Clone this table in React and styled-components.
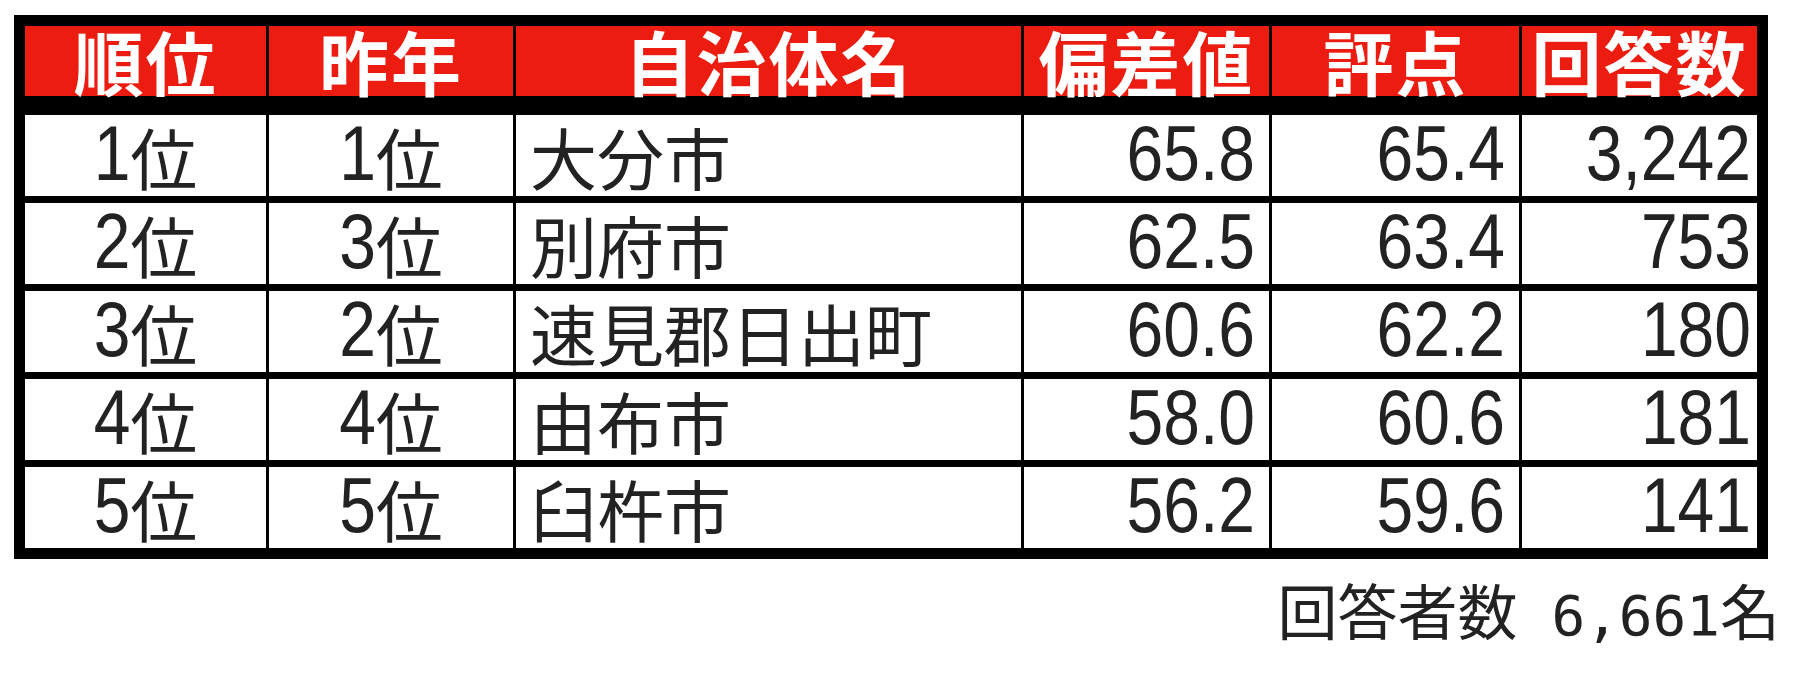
import React from "react";
import styled, { createGlobalStyle } from "styled-components";

const GlobalStyle = createGlobalStyle`
  html, body {
    margin: 0;
    padding: 0;
    background: #ffffff;
  }
  body {
    font-family: "Liberation Sans", "Noto Sans CJK JP", sans-serif;
    color: #222222;
  }
`;

const Page = styled.div`
  width: 1800px;
  height: 677px;
  padding: 15px 0 0 14px;
  box-sizing: border-box;
  background: #ffffff;
`;

const Table = styled.div`
  display: grid;
  grid-template-columns: 241px 244px 505px 245px 247px 235px;
  grid-template-rows: 82px repeat(5, 81px);
  column-gap: 3px;
  row-gap: 7px;
  width: max-content;
  padding: 11px;
  background: #000000;
`;

const HeadCell = styled.div`
  height: 70px;
  background: #ec1d10;
  color: #ffffff;
  display: flex;
  align-items: center;
  justify-content: center;
  font-family: "Noto Sans CJK JP", sans-serif;
  font-weight: 700;
  font-size: 70px;
  line-height: 70px;
  letter-spacing: 2px;
  white-space: nowrap;
`;

const Cell = styled.div`
  background: #ffffff;
  display: flex;
  align-items: center;
  justify-content: ${(p) =>
    p.$align === "left" ? "flex-start" : p.$align === "right" ? "flex-end" : "center"};
  padding: ${(p) =>
    p.$align === "left" ? "0 0 0 14px" : p.$align === "right" ? `0 ${p.$pad || 14}px 0 0` : "0"};
  font-size: 66px;
  line-height: 1;
  white-space: nowrap;
`;

const Num = styled.span`
  display: inline-block;
  font-family: "Liberation Sans", sans-serif;
  font-size: 66px;
  transform: scaleY(1.17);
  transform-origin: 50% 80%;
`;

const Kanji = styled.span`
  font-family: "Noto Sans CJK JP", sans-serif;
  font-size: 67px;
  font-weight: 400;
`;

const Footer = styled.div`
  display: flex;
  justify-content: flex-end;
  align-items: baseline;
  width: 1766px;
  margin-top: 20px;
  font-family: "Noto Sans CJK JP", sans-serif;
  font-size: 60px;
  line-height: 1;
  color: #222222;
`;

const FooterNum = styled.span`
  font-family: "DejaVu Sans Mono", monospace;
  font-size: 56px;
  margin-left: 34px;
`;

const headers = ["順位", "昨年", "自治体名", "偏差値", "評点", "回答数"];

const rows = [
  { rank: "1", prev: "1", name: "大分市", dev: "65.8", score: "65.4", count: "3,242" },
  { rank: "2", prev: "3", name: "別府市", dev: "62.5", score: "63.4", count: "753" },
  { rank: "3", prev: "2", name: "速見郡日出町", dev: "60.6", score: "62.2", count: "180" },
  { rank: "4", prev: "4", name: "由布市", dev: "58.0", score: "60.6", count: "181" },
  { rank: "5", prev: "5", name: "臼杵市", dev: "56.2", score: "59.6", count: "141" },
];

function Rank({ n }) {
  return (
    <>
      <Num>{n}</Num>
      <Kanji>位</Kanji>
    </>
  );
}

export default function App() {
  return (
    <>
      <GlobalStyle />
      <Page>
        <Table>
          {headers.map((h) => (
            <HeadCell key={h}>{h}</HeadCell>
          ))}
          {rows.map((r) => (
            <React.Fragment key={r.rank}>
              <Cell>
                <Rank n={r.rank} />
              </Cell>
              <Cell>
                <Rank n={r.prev} />
              </Cell>
              <Cell $align="left">
                <Kanji>{r.name}</Kanji>
              </Cell>
              <Cell $align="right">
                <Num>{r.dev}</Num>
              </Cell>
              <Cell $align="right">
                <Num>{r.score}</Num>
              </Cell>
              <Cell $align="right" $pad={6}>
                <Num>{r.count}</Num>
              </Cell>
            </React.Fragment>
          ))}
        </Table>
        <Footer>
          回答者数
          <FooterNum>6,661</FooterNum>
          名
        </Footer>
      </Page>
    </>
  );
}
